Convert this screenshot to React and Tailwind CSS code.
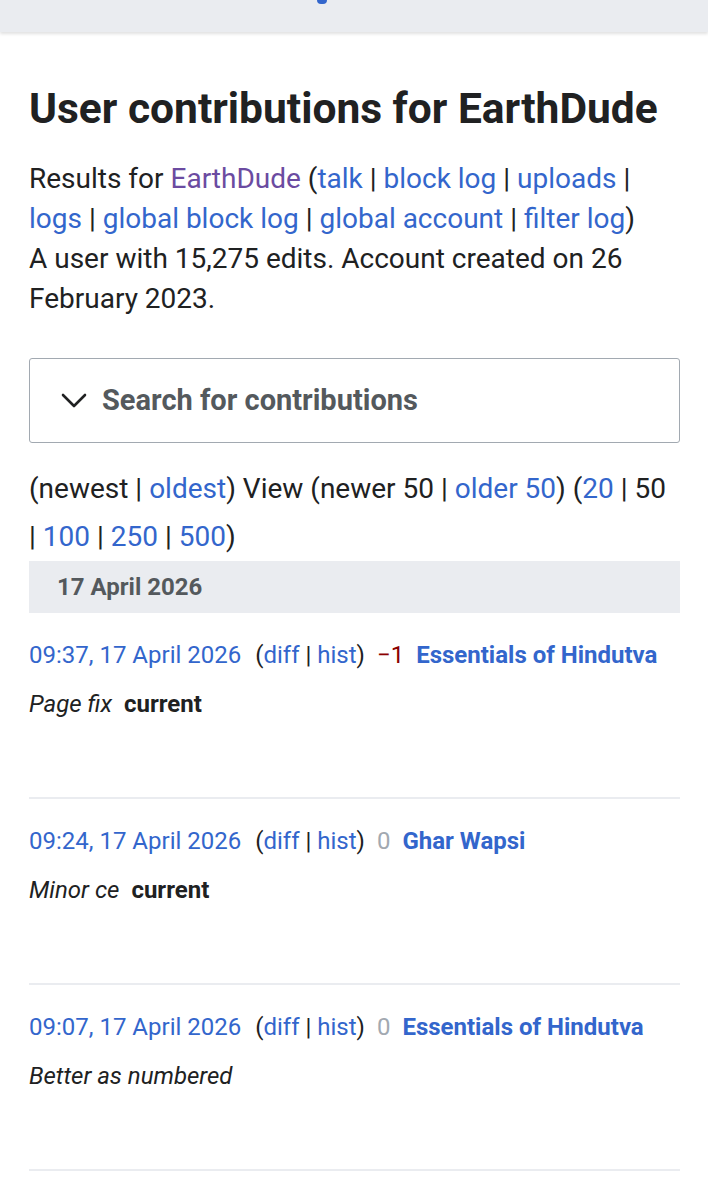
import React from "react";

const link = "text-[#3366cc]";

const entries = [
  { time: "09:37, 17 April 2026", size: "−1", sizeCls: "text-[#8b0000]", title: "Essentials of Hindutva", summary: "Page fix", current: true },
  { time: "09:24, 17 April 2026", size: "0", sizeCls: "text-[#a2a9b1]", title: "Ghar Wapsi", summary: "Minor ce", current: true },
  { time: "09:07, 17 April 2026", size: "0", sizeCls: "text-[#a2a9b1]", title: "Essentials of Hindutva", summary: "Better as numbered", current: false },
];

function Sep() {
  return <span className="text-[#202122]"> | </span>;
}

export default function App() {
  return (
    <div className="min-h-[1200px] bg-white text-[#202122] font-['Roboto',sans-serif] overflow-hidden">
      {/* top bar, cut off in the screenshot */}
      <div className="h-[32px] bg-[#eaecf0] shadow-[0_2px_3px_rgba(0,0,0,0.12)] relative overflow-hidden">
        <div className="absolute left-[317px] -top-[4px] w-[10px] h-[8px] rounded-full bg-[#3366cc]" />
      </div>

      <main className="px-[29px] pr-[28px]">
        <h1 className="mt-[53px] text-[42.5px] leading-[48px] font-bold">
          User contributions for EarthDude
        </h1>

        <div className="mt-[26px] text-[28px] leading-[40px]">
          <p>
            Results for <span className="text-[#6b4ba1]">EarthDude</span> (
            <span className={link}>talk</span>
            <Sep />
            <span className={link}>block log</span>
            <Sep />
            <span className={link}>uploads</span>
            <Sep />
            <span className={link}>logs</span>
            <Sep />
            <span className={link}>global block log</span>
            <Sep />
            <span className={link}>global account</span>
            <Sep />
            <span className={link}>filter log</span>)
          </p>
          <p>A user with 15,275 edits. Account created on 26 February 2023.</p>
        </div>

        <div className="mt-[39px] h-[85px] border border-[#a2a9b1] rounded-[3px] flex items-center pl-[31px] gap-[15px]">
          <svg width="26" height="16" viewBox="0 0 26 16" fill="none" stroke="#202122" strokeWidth="2.6" strokeLinecap="round" strokeLinejoin="round">
            <polyline points="2,2 13,13 24,2" />
          </svg>
          <span className="text-[29px] font-bold text-[#54595d]">Search for contributions</span>
        </div>

        <p className="mt-[22px] pr-[8px] text-[28px] leading-[48px]">
          (newest | <span className={link}>oldest</span>) View (newer 50 | <span className={link}>older 50</span>) (
          <span className={link}>20</span> | 50 | <span className={link}>100</span> | <span className={link}>250</span> |{" "}
          <span className={link}>500</span>)
        </p>

        <div className="h-[52px] bg-[#eaecf0] flex items-center pl-[28px] text-[24px] font-bold text-[#54595d]">
          17 April 2026
        </div>

        <ul>
          {entries.map((e, i) => (
            <li key={i} className="pt-[24px] pb-[75px] border-b-2 border-[#eaecf0] text-[24px] leading-[36px]">
              <div className="whitespace-nowrap">
                <span className={link}>{e.time}</span>
                <span className="ml-[14px]">(</span>
                <span className={link}>diff</span> | <span className={link}>hist</span>)
                <span className={`ml-[12px] ${e.sizeCls}`}>{e.size}</span>
                <span className={`ml-[12px] font-bold ${link}`}>{e.title}</span>
              </div>
              <div className="mt-[13px]">
                <span className="italic">{e.summary}</span>
                {e.current && <span className="ml-[12px] font-bold">current</span>}
              </div>
            </li>
          ))}
        </ul>
      </main>
    </div>
  );
}
